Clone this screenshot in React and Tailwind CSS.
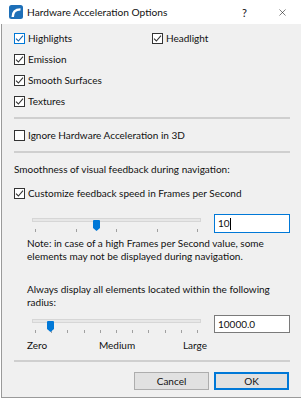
import { X } from "lucide-react";

function Check({ checked, focus }) {
  return (
    <span
      className={`flex h-[11px] w-[11px] shrink-0 items-center justify-center border bg-white ${
        focus ? "border-[#0078d7]" : "border-[#333333]"
      }`}
    >
      {checked ? (
        <svg width="9" height="9" viewBox="0 0 9 9">
          <path
            d="M1 4.6 L3.4 7 L8 1.6"
            fill="none"
            stroke={focus ? "#1660a8" : "#333333"}
            strokeWidth="1.1"
          />
        </svg>
      ) : null}
    </span>
  );
}

function CheckRow({ label, checked = true, focus = false }) {
  return (
    <div className="flex h-[21px] shrink-0 items-center gap-[3px]">
      <Check checked={checked} focus={focus} />
      <span>{label}</span>
    </div>
  );
}

function Thumb() {
  return (
    <svg width="7" height="11" viewBox="0 0 7 11">
      <path d="M1 0 H6 Q7 0 7 1 V8 L3.5 11 L0 8 V1 Q0 0 1 0 Z" fill="#0078d7" />
    </svg>
  );
}

function Slider({ ticks, thumbLeft }) {
  return (
    <div className="relative h-[19px] w-[169px]">
      <div className="mt-[4px] h-[4px] border border-[#d6d6d6] bg-[#e7e7e7]" />
      <div className="mt-[7px] flex h-[3px] justify-between px-[3px]">
        {Array.from({ length: ticks }).map((_, i) => (
          <span className="h-[3px] w-px bg-[#a0a0a0]" key={i} />
        ))}
      </div>
      <div className="absolute top-[2px] flex" style={{ left: thumbLeft }}>
        <Thumb />
      </div>
    </div>
  );
}

export default function App() {
  return (
    <div className="h-[400px] w-[301px] overflow-hidden bg-white font-['Segoe_UI','Lato',sans-serif] text-[10px] leading-[13px] text-[#111111]">
      <div className="flex h-[24px] items-center">
        <svg className="ml-[9px]" width="14" height="14" viewBox="0 0 14 14">
          <rect x="0" y="0" width="14" height="14" rx="2.5" fill="#1d6fb8" />
          <path d="M2.5 12 Q2.5 3.2 11.5 3.2 L11.5 5.6 Q5 5.6 5 12 Z" fill="#ffffff" />
        </svg>
        <span className="ml-[4px] text-[10.2px]">Hardware Acceleration Options</span>
        <span className="ml-auto text-[11px]">?</span>
        <X className="ml-[30px] mr-[13px]" size={11} strokeWidth={1.2} />
      </div>

      <div className="ml-px box-border flex h-[374px] flex-col border-b border-l border-[#9a9a9a] bg-[#f0f0f0] pl-[12px] pr-[11px] pt-[4px]">
        <div className="grid h-[21px] shrink-0 grid-cols-[138px_1fr]">
          <CheckRow label="Highlights" focus />
          <CheckRow label="Headlight" />
        </div>
        <CheckRow label="Emission" />
        <CheckRow label="Smooth Surfaces" />
        <CheckRow label="Textures" />

        <div className="mt-[5px] h-[2px] shrink-0 bg-[#cfcfcf]" />
        <div className="mt-[6px] h-[21px] shrink-0">
          <CheckRow label="Ignore Hardware Acceleration in 3D" checked={false} />
        </div>
        <div className="mt-[5px] h-[2px] shrink-0 bg-[#cfcfcf]" />

        <p className="mt-[10px] h-[13px] shrink-0">Smoothness of visual feedback during navigation:</p>
        <div className="mt-[7px] h-[21px] shrink-0">
          <CheckRow label="Customize feedback speed in Frames per Second" />
        </div>

        <div className="mt-[10px] flex h-[19px] shrink-0 items-start justify-between">
          <div className="ml-[18px]">
            <Slider ticks={5} thumbLeft={61} />
          </div>
          <div className="flex h-[19px] w-[76px] items-center border border-[#0078d7] bg-white px-[3px]">
            <span>10</span>
            <span className="h-[12px] w-px bg-black" />
          </div>
        </div>

        <p className="ml-[13px] mt-[4px] h-[26px] shrink-0">
          Note: in case of a high Frames per Second value, some
          <br />
          elements may not be displayed during navigation.
        </p>

        <p className="ml-[13px] mt-[20px] h-[26px] shrink-0">
          Always display all elements located within the following
          <br />
          radius:
        </p>

        <div className="mt-[6px] flex h-[33px] shrink-0 items-start justify-between">
          <div className="ml-[13px]">
            <div className="ml-[5px]">
              <Slider ticks={11} thumbLeft={15} />
            </div>
            <div className="mt-px grid h-[13px] w-[180px] grid-cols-3">
              <span className="text-left">Zero</span>
              <span className="text-center">Medium</span>
              <span className="text-right">Large</span>
            </div>
          </div>
          <div className="flex h-[18px] w-[76px] items-center border border-[#7a7a7a] bg-white px-[3px]">
            10000.0
          </div>
        </div>

        <div className="mt-[12px] h-[2px] shrink-0 bg-[#cfcfcf]" />

        <div className="mr-px mt-[10px] flex h-[18px] shrink-0 justify-end gap-[5px]">
          <button
            className="flex h-[18px] w-[75px] items-center justify-center border border-[#adadad] bg-[#e1e1e1]"
            type="button"
          >
            Cancel
          </button>
          <button
            className="flex h-[18px] w-[75px] items-center justify-center border-2 border-[#0078d7] bg-[#e1e1e1]"
            type="button"
          >
            OK
          </button>
        </div>
      </div>
    </div>
  );
}
